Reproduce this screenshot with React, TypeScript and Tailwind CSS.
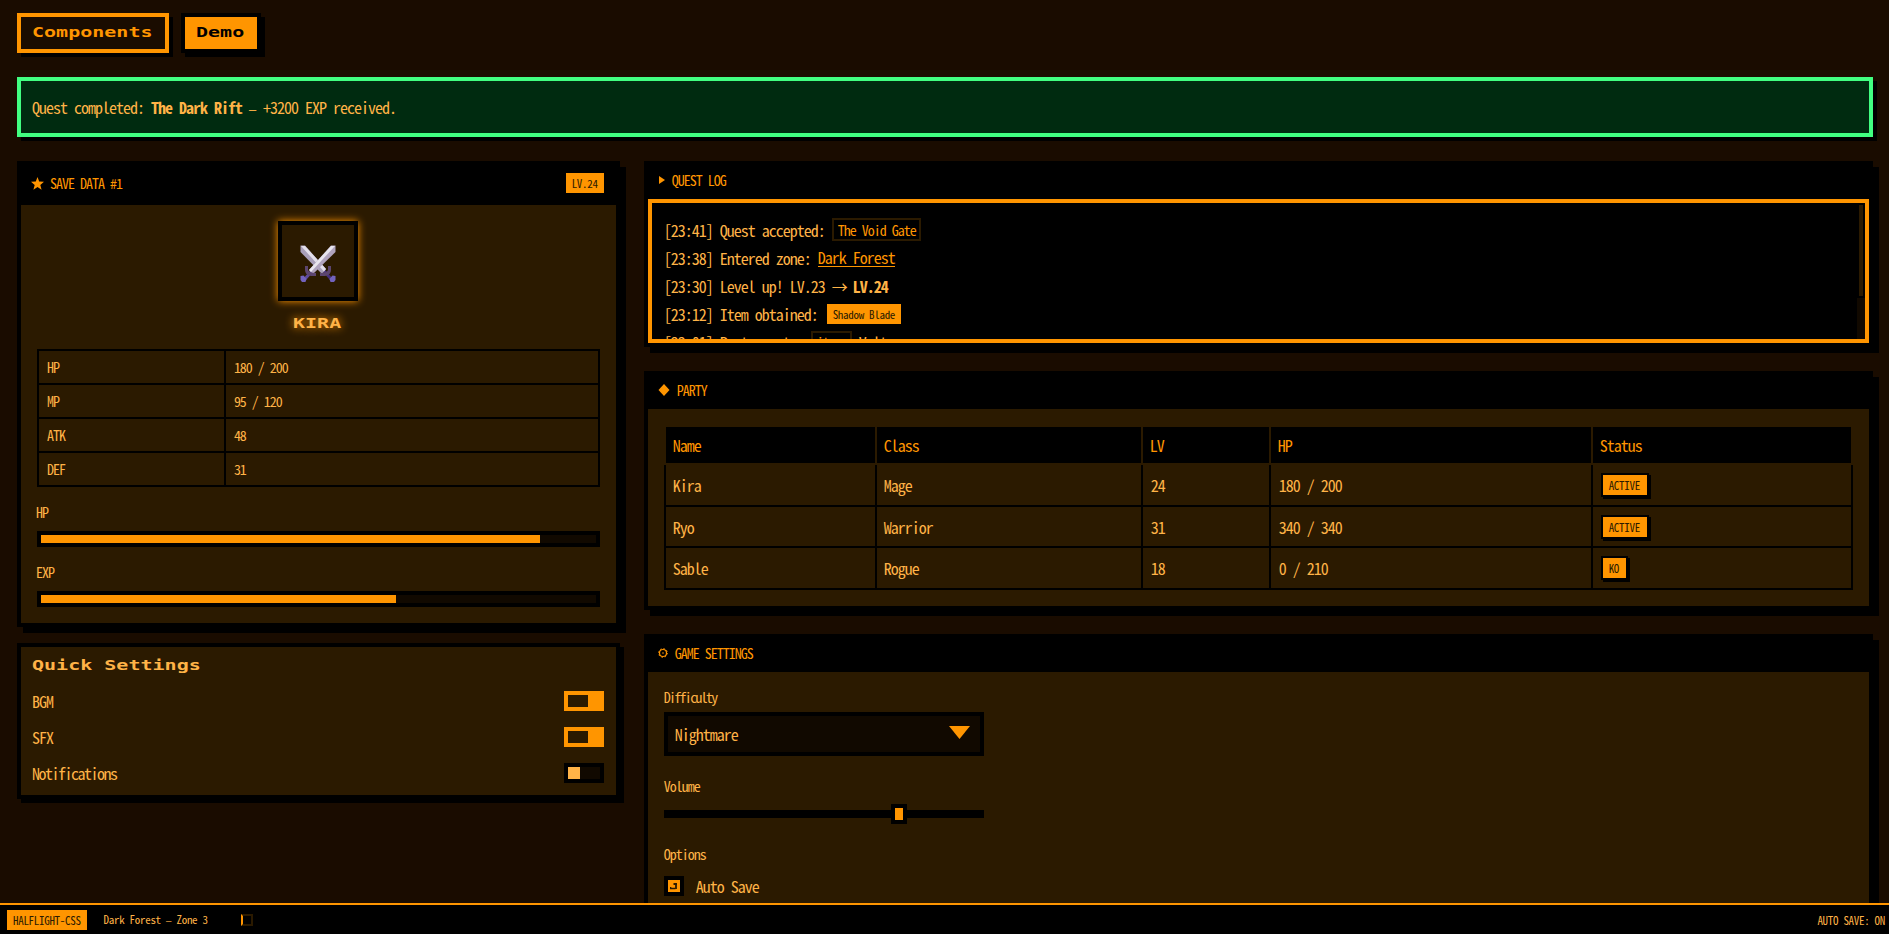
import type React from "react"

const stats = [
  { label: "HP", value: "180 / 200" },
  { label: "MP", value: "95 / 120" },
  { label: "ATK", value: "48" },
  { label: "DEF", value: "31" },
]

const bars = [
  { label: "HP", percent: 90 },
  { label: "EXP", percent: 64 },
]

const toggles = [
  { label: "BGM", on: true, tracking: "tracking-[-1px]" },
  { label: "SFX", on: true, tracking: "tracking-[-1px]" },
  { label: "Notifications", on: false, tracking: "tracking-[-1.5px]" },
]

const party = [
  { name: "Kira", role: "Mage", lv: "24", hp: "180 / 200", status: "ACTIVE", height: "h-[42px]" },
  { name: "Ryo", role: "Warrior", lv: "31", hp: "340 / 340", status: "ACTIVE", height: "h-[41px]" },
  { name: "Sable", role: "Rogue", lv: "18", hp: "0 / 210", status: "KO", height: "h-[42px]" },
]

// Wide display face used for buttons and headings
const Wide: React.FC<{ children: React.ReactNode }> = ({ children }) => (
  <span className="-ml-px inline-block origin-left scale-x-[1.43] font-['DejaVu_Sans_Mono',monospace] text-[14px] leading-5 font-bold tracking-normal">
    {children}
  </span>
)

const Dash: React.FC<{ className: string }> = ({ className }) => (
  <span className={`font-['Liberation_Mono',monospace] ${className}`}>—</span>
)

const Small: React.FC<{ children: React.ReactNode }> = ({ children }) => (
  <span className="text-[11px] leading-3 tracking-[-0.3px]">{children}</span>
)

const CardHeader: React.FC<{ icon: React.ReactNode; title: string; children?: React.ReactNode }> = ({
  icon,
  title,
  children,
}) => (
  <div className="flex items-center border-b-4 border-black bg-black pt-2 pr-3 pb-2 pl-[10px] text-[#ff9500]">
    {icon}
    <span className="-ml-px text-[14px] leading-[14px]">{title}</span>
    {children}
  </div>
)

const Swords: React.FC = () => (
  <svg className="mt-1" width="36" height="37" viewBox="0 0 36 37">
    <path d="M4 35 L12 26" stroke="#5d4a9c" strokeWidth="3" />
    <path d="M32 35 L24 26" stroke="#46307c" strokeWidth="3" />
    <path d="M0.5 0.5 H5 L26 24 L22 29 L0.5 7 Z" fill="#a99fb9" />
    <path d="M1 1 H5 L26 24 L24 26.5 Z" fill="#e3dfea" />
    <path d="M35.5 0.5 H31 L9 25 L13 29 L35.5 7 Z" fill="#b0a3be" />
    <path d="M35 1 H31 L9 25 L11 27 Z" fill="#e8e5ee" />
    <path d="M5 21 H8 V25 Q9 28 16 28 V31 H11 Q5 30 5 25 Z" fill="#5c456f" />
    <path d="M31 21 H28 V25 Q27 28 20 28 V31 H25 Q31 30 31 25 Z" fill="#5c456f" />
    <path d="M0.5 31 L3.5 30.5 L6.5 34 L5.5 37 H2 L0.5 35 Z" fill="#7262bd" />
    <path d="M35.5 31 L32.5 30.5 L29.5 34 L30.5 37 H34 L35.5 35 Z" fill="#7262bd" />
  </svg>
)

const SaveData: React.FC = () => (
  <div className="border-4 border-black bg-[#2b1a00] shadow-[6px_6px_0_#000]">
    <CardHeader
      title="SAVE DATA #1"
      icon={
        <svg className="mr-[7px]" width="13" height="13" viewBox="0 0 13 13">
          <path d="M6.5 0 L8.2 4.6 L13 4.8 L9.3 7.9 L10.6 12.8 L6.5 10 L2.4 12.8 L3.7 7.9 L0 4.8 L4.8 4.6 Z" fill="#ff9500" />
        </svg>
      }
    >
      <span className="ml-auto flex h-5 items-center bg-[#ff9500] px-[6px] text-[#2b1a00]">
        <Small>LV.24</Small>
      </span>
    </CardHeader>
    <div className="p-4">
      <div className="flex flex-col items-center">
        <div className="flex h-20 w-20 items-center justify-center border-4 border-black shadow-[0_0_8px_#ff9500]">
          <Swords />
        </div>
        <div className="mt-[11px] flex h-[25px] w-12 items-start pt-px text-[#ffb347] [text-shadow:0_0_8px_#ff9500]">
          <Wide>KIRA</Wide>
        </div>
      </div>
      <table className="mt-3 w-full table-fixed border-collapse text-[14px] leading-4">
        <tbody>
          {stats.map((stat) => (
            <tr key={stat.label} className="h-[34px]">
              <td className="w-1/3 border-2 border-black px-2 py-0">{stat.label}</td>
              <td className="border-2 border-black px-2 py-0">{stat.value}</td>
            </tr>
          ))}
        </tbody>
      </table>
      <div className="mt-4 space-y-4">
        {bars.map((bar) => (
          <div key={bar.label}>
            <div className="-ml-px h-7 text-[14px] leading-[18px]">{bar.label}</div>
            <div className="h-4 border-4 border-black bg-[#110900]">
              <div className="h-full bg-[#ff9500]" style={{ width: `${bar.percent}%` }} />
            </div>
          </div>
        ))}
      </div>
    </div>
  </div>
)

const QuickSettings: React.FC = () => (
  <div className="border-4 border-black bg-[#2b1a00] px-3 pt-2 pb-3 shadow-[4px_4px_0_#000]">
    <h3 className="mb-3 flex h-6 items-start">
      <Wide>Quick Settings</Wide>
    </h3>
    <div className="space-y-4">
      {toggles.map((toggle) => (
        <div key={toggle.label} className="flex h-5 items-center justify-between">
          <span className={`-ml-px ${toggle.tracking}`}>{toggle.label}</span>
          {toggle.on ? (
            <span className="h-5 w-10 border-4 border-[#ff9500] bg-[#ff9500]">
              <span className="block h-3 w-5 bg-[#2b1a00]" />
            </span>
          ) : (
            <span className="h-5 w-10 border-4 border-black bg-[#110900]">
              <span className="block h-3 w-3 bg-[#ffb347]" />
            </span>
          )}
        </div>
      ))}
    </div>
  </div>
)

const Code: React.FC<{ children: React.ReactNode }> = ({ children }) => (
  <code className="mr-[7px] flex h-[23px] items-center border-2 border-[#2b1a00] pr-[3px] pl-[4px] font-[inherit] text-[14px] text-[#ff9500]">
    {children}
  </code>
)

const QuestLog: React.FC = () => (
  <div className="border-4 border-black bg-black shadow-[6px_6px_0_#000]">
    <CardHeader
      title="QUEST LOG"
      icon={
        <svg className="mr-2 ml-px" width="6" height="8" viewBox="0 0 6 8">
          <path d="M0 0 L6 4 L0 8 Z" fill="#ff9500" />
        </svg>
      }
    />
    <div className="flex h-36 border-4 border-[#ff9500]">
      <div className="flex-1 overflow-hidden px-3 pt-3 whitespace-pre">
        <div className="flex h-[29px] items-center">
          {"[23:41] Quest accepted: "}
          <Code>The Void Gate</Code>
        </div>
        <div className="flex h-7 items-center">
          {"[23:38] Entered zone: "}
          <a className="border-b border-[#ff9500] leading-[17px] text-[#ff9500]">Dark Forest</a>
        </div>
        <div className="flex h-7 items-center">
          {"[23:30] Level up! LV.23 "}
          <span className="mr-[6px]">→</span>
          <b>LV.24</b>
        </div>
        <div className="flex h-7 items-center">
          {"[23:12] Item obtained: "}
          <span className="ml-[2px] flex h-5 items-center bg-[#ff9500] px-[6px] text-[#2b1a00]">
            <Small>Shadow Blade</Small>
          </span>
        </div>
        <div className="flex h-7 items-center">
          {"[23:01] Party quote: "}
          <Code>items</Code>
          Volt
        </div>
      </div>
      <div className="w-2 bg-[#110900]">
        <div className="h-[95px] border-2 border-black bg-[#2b1a00]" />
      </div>
    </div>
  </div>
)

const Party: React.FC = () => (
  <div className="border-4 border-black bg-[#2b1a00] shadow-[6px_6px_0_#000]">
    <CardHeader
      title="PARTY"
      icon={
        <svg className="mr-2" width="12" height="12" viewBox="0 0 12 12">
          <path d="M6 0 L11.5 6 L6 12 L0.5 6 Z" fill="#ff9500" />
        </svg>
      }
    />
    <div className="p-4">
      <table className="w-full table-fixed border-collapse text-left leading-5">
        <colgroup>
          <col className="w-[211px]" />
          <col className="w-[266px]" />
          <col className="w-[128px]" />
          <col className="w-[322px]" />
          <col />
        </colgroup>
        <thead>
          <tr className="h-[38px] bg-black text-[#ff9500]">
            {["Name", "Class", "LV", "HP", "Status"].map((name) => (
              <th key={name} className="border-2 border-[#2b1a00] px-[7px] py-0 font-normal">
                {name}
              </th>
            ))}
          </tr>
        </thead>
        <tbody>
          {party.map((member) => (
            <tr key={member.name} className={member.height}>
              <td className="border-2 border-black px-[7px] py-0">{member.name}</td>
              <td className="border-2 border-black px-[7px] py-0">{member.role}</td>
              <td className="border-2 border-black px-2 py-0">{member.lv}</td>
              <td className="border-2 border-black px-2 py-0">{member.hp}</td>
              <td className="border-2 border-black px-2 py-0">
                <span className="flex h-6 w-fit items-center border-2 border-black bg-[#ff9500] pr-[7px] pl-[6px] text-[#2b1a00] shadow-[2px_2px_0_#000]">
                  <Small>{member.status}</Small>
                </span>
              </td>
            </tr>
          ))}
        </tbody>
      </table>
    </div>
  </div>
)

const GameSettings: React.FC = () => (
  <div className="h-[400px] border-4 border-black bg-[#2b1a00] shadow-[6px_6px_0_#000]">
    <CardHeader
      title="GAME SETTINGS"
      icon={
        <svg className="mr-2" width="10" height="10" viewBox="0 0 10 10" fill="none" stroke="#ff9500">
          <circle cx="5" cy="5" r="3.5" strokeWidth="1.2" />
          <circle cx="5" cy="5" r="4.4" strokeWidth="1" strokeDasharray="1.4 2.05" />
          <circle cx="5" cy="5" r="0.8" fill="#ff9500" stroke="none" />
        </svg>
      }
    />
    <div className="w-[352px] p-4">
      <div className="h-6 text-[14px] leading-[18px] tracking-[-1.7px]">Difficulty</div>
      <div className="flex h-11 items-center justify-between border-4 border-black bg-[#110900] pr-[10px] pl-[7px]">
        <span>Nightmare</span>
        <svg className="-mt-1" width="21" height="13" viewBox="0 0 21 13">
          <path d="M0 0 H21 L10.5 13 Z" fill="#ff9500" />
        </svg>
      </div>
      <div className="mt-5 h-7 text-[14px] leading-5">Volume</div>
      <div className="relative flex h-5 items-center">
        <div className="h-2 w-full bg-black" />
        <div className="absolute left-[227px] h-5 w-4 border-4 border-black bg-[#ff9500]" />
      </div>
      <div className="mt-5 h-8 text-[14px] leading-5">Options</div>
      <div className="flex h-5 items-center">
        <span className="mr-3 flex h-5 w-5 items-center justify-center border-4 border-black bg-[#ff9500]">
          <svg width="8" height="7" viewBox="0 0 8 7" fill="none" stroke="#2b1a00">
            <path d="M0.5 4 V5.5 H5.5" strokeWidth="1.6" />
            <path d="M3.5 1 H7 M6 0.5 V6" strokeWidth="1.8" />
          </svg>
        </span>
        Auto Save
      </div>
    </div>
  </div>
)

export default function App() {
  return (
    <div className="flex h-[934px] flex-col overflow-hidden bg-[#1a0c00] font-['Noto_Sans_Mono_CJK_JP','Noto_Sans_CJK_JP',monospace] text-[16px] leading-5 tracking-[-1px] text-[#ffb347]">
      <main className="min-h-0 flex-1 overflow-hidden pt-[13px] pr-4 pl-[17px]">
        <div className="flex gap-3">
          <button className="h-10 w-38 border-4 border-[#ff9500] bg-[#1a0c00] px-3 pb-1 text-left text-[#ff9500] shadow-[4px_4px_0_#000]">
            <Wide>Components</Wide>
          </button>
          <button className="h-10 w-20 border-4 border-black bg-[#ff9500] px-3 pb-1 text-left text-black shadow-[4px_4px_0_#000]">
            <Wide>Demo</Wide>
          </button>
        </div>

        <div className="mt-6 h-15 border-4 border-[#41ff81] bg-[#002b10] py-3 pr-3 pl-[11px] leading-7 whitespace-pre shadow-[4px_4px_0_#000]">
          Quest completed: <b>The Dark Rift</b> <Dash className="text-[12px] tracking-[-0.2px]" /> +3200 EXP received.
        </div>

        <div className="mt-6 grid grid-cols-12 gap-6">
          <div className="col-span-4 space-y-4">
            <SaveData />
            <QuickSettings />
          </div>
          <div className="col-span-8 space-y-6">
            <QuestLog />
            <Party />
            <GameSettings />
          </div>
        </div>
      </main>

      <footer className="flex h-[31px] shrink-0 items-center border-t-2 border-[#ff9500] bg-black pt-px pr-1 pl-[7px] whitespace-pre">
        <span className="flex h-5 items-center bg-[#ff9500] px-[6px] text-[#2b1a00]">
          <Small>HALFLIGHT-CSS</Small>
        </span>
        <span className="ml-[17px] flex items-center pt-px">
          <Small>
            Dark Forest <Dash className="text-[9px] tracking-[-0.15px]" /> Zone 3
          </Small>
        </span>
        <span className="ml-[33px] h-3 w-3 border-2 border-[#2b1a00] border-l-[#ff9500]" />
        <span className="ml-auto flex items-center">
          <Small>AUTO SAVE: ON</Small>
        </span>
      </footer>
    </div>
  )
}
